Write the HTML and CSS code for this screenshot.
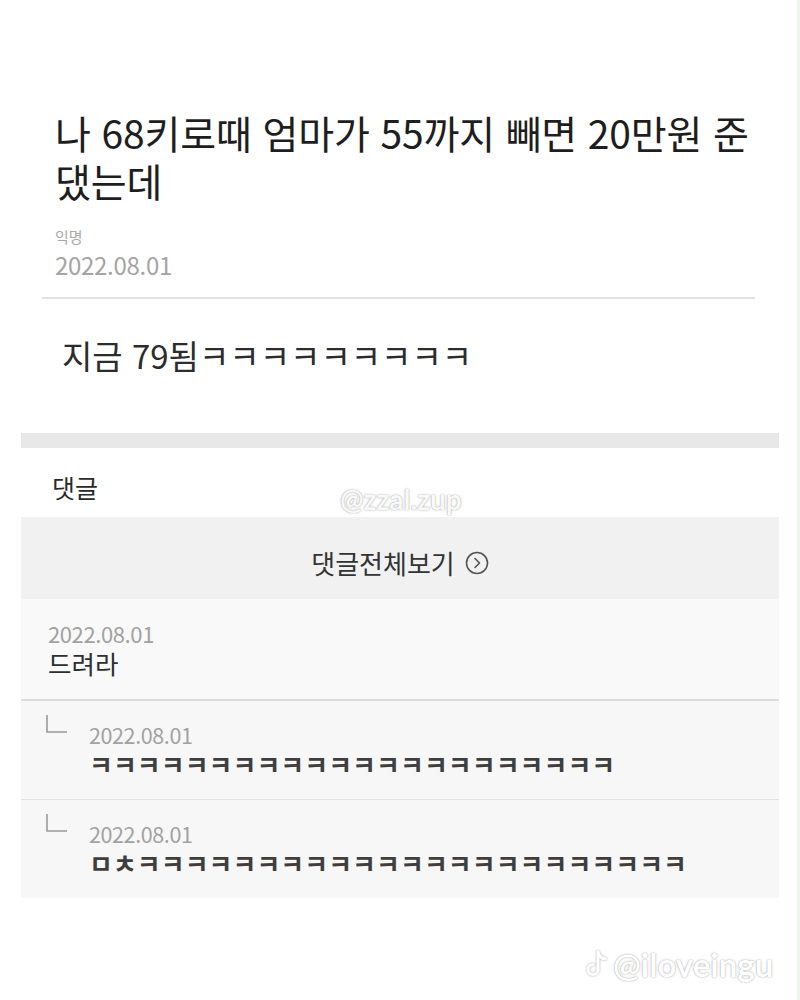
FILE: index.html
```html
<!DOCTYPE html>
<html lang="ko">
<head>
<meta charset="utf-8">
<title>post</title>
<link rel="stylesheet" href="styles.css">
</head>
<body>
<div class="page">
  <header class="post-head">
    <h1 class="title">나 68키로때 엄마가 55까지 빼면 20만원 준<br>댔는데</h1>
    <div class="author">익명</div>
    <div class="post-date">2022.08.01</div>
  </header>
  <div class="divider"></div>
  <div class="post-body">지금 79됨ㅋㅋㅋㅋㅋㅋㅋㅋㅋ</div>
  <div class="gap-bar"></div>
  <section class="comments">
    <h2 class="comments-label">댓글</h2>
    <div class="comment-box">
      <div class="view-all">
        <span>댓글전체보기</span>
        <svg class="arrow-circle" width="24" height="24" viewBox="0 0 24 24">
          <circle cx="12" cy="12" r="10.5" fill="none" stroke="#555" stroke-width="1.6"/>
          <path d="M10 7.5 L14.5 12 L10 16.5" fill="none" stroke="#555" stroke-width="1.6" stroke-linecap="round" stroke-linejoin="round"/>
        </svg>
      </div>
      <div class="comment">
        <div class="c-date">2022.08.01</div>
        <div class="c-text">드려라</div>
      </div>
      <div class="comment reply">
        <svg class="reply-mark" width="22" height="20" viewBox="0 0 22 20">
          <path d="M1 1 V18 H21" fill="none" stroke="#9a9a9a" stroke-width="1.6"/>
        </svg>
        <div class="reply-body">
          <div class="c-date">2022.08.01</div>
          <div class="c-text">ㅋㅋㅋㅋㅋㅋㅋㅋㅋㅋㅋㅋㅋㅋㅋㅋㅋㅋㅋㅋㅋㅋ</div>
        </div>
      </div>
      <div class="comment reply last">
        <svg class="reply-mark" width="22" height="20" viewBox="0 0 22 20">
          <path d="M1 1 V18 H21" fill="none" stroke="#9a9a9a" stroke-width="1.6"/>
        </svg>
        <div class="reply-body">
          <div class="c-date">2022.08.01</div>
          <div class="c-text">ㅁㅊㅋㅋㅋㅋㅋㅋㅋㅋㅋㅋㅋㅋㅋㅋㅋㅋㅋㅋㅋㅋㅋㅋㅋ</div>
        </div>
      </div>
    </div>
  </section>
  <div class="wm wm-zzal">@zzal.zup</div>
  <div class="wm wm-tiktok">
    <svg class="tt-logo" width="22" height="28" viewBox="0 0 22 28">
      <path d="M12 2 V19.5 A5 5 0 1 1 7 14.5 M12 2 C12.5 6 15.5 8.5 19.5 8.8" fill="none" stroke="#fff" stroke-width="3" stroke-linecap="round"/>
    </svg>
    <span>@iloveingu</span>
  </div>
</div>
</body>
</html>
```

FILE: styles.css
```css
body {
  margin: 0;
  font-family: "Noto Sans CJK KR", "Noto Sans", sans-serif;
  color: #222;
  background: #fff;
}
.page {
  position: relative;
  width: 800px;
  height: 1000px;
  background: #fff;
  box-shadow: inset -3px 0 0 #eef6ea;
  overflow: hidden;
}
.post-head {
  padding: 108px 20px 0 55px;
}
.title {
  margin: 0;
  font-size: 39px;
  line-height: 48px;
  font-weight: 400;
  color: #1e1e1e;
  letter-spacing: -0.15px;
}
.author {
  margin-top: 23px;
  font-size: 15px;
  line-height: 20px;
  color: #a8a8a8;
}
.post-date {
  margin-top: 4px;
  font-size: 24px;
  line-height: 28px;
  color: #a4a4a4;
  letter-spacing: -0.3px;
}
.divider {
  margin: 18px 45px 0 42px;
  height: 2px;
  background: #e2e2e2;
}
.post-body {
  margin-top: 36px;
  padding-left: 62px;
  font-size: 33px;
  line-height: 40px;
  color: #2c2c2c;
}
.gap-bar {
  margin: 58px 21px 0 21px;
  height: 15px;
  background: #e8e8e8;
}
.comments {
  padding: 0 21px;
}
.comments-label {
  margin: 24px 0 0 31px;
  font-size: 25px;
  line-height: 30px;
  font-weight: 400;
  color: #2a2a2a;
}
.comment-box {
  margin-top: 15px;
  background: #f8f8f8;
}
.view-all {
  display: flex;
  justify-content: center;
  align-items: center;
  gap: 10px;
  height: 82px;
  padding-top: 10px;
  box-sizing: border-box;
  background: #f1f1f1;
  font-size: 26px;
  line-height: 30px;
  color: #333;
}
.arrow-circle {
  display: block;
}
.comment {
  padding: 22px 0 18px 27px;
  border-bottom: 2px solid #dedede;
  background: #f9f9f9;
}
.c-date {
  font-size: 22px;
  line-height: 24px;
  color: #a2a2a2;
  letter-spacing: -0.4px;
}
.c-text {
  font-size: 25.5px;
  line-height: 36px;
  color: #2e2e2e;
}
.reply {
  display: grid;
  grid-template-columns: 43px 1fr;
  padding: 13px 0 18px 25px;
  border-bottom: 1px solid #e2e2e2;
  background: #f7f7f7;
}
.reply.last {
  border-bottom: none;
}
.reply-mark {
  display: block;
}
.reply-body {
  padding-top: 9px;
}
.reply .c-date {
  font-size: 21.5px;
}
.reply .c-text {
  font-size: 26px;
  line-height: 34px;
  font-weight: 700;
  color: #3e3e3e;
}
.wm {
  position: absolute;
  color: #fff;
  font-family: "Lato", "Open Sans", sans-serif;
  font-weight: 700;
  text-shadow: 0 0 1px rgba(0,0,0,0.35), 0 0 3px rgba(0,0,0,0.18);
}
.wm-zzal {
  left: 340px;
  top: 482px;
  font-size: 28px;
  line-height: 34px;
  color: rgba(255,255,255,0.95);
}
.wm-tiktok {
  left: 586px;
  top: 945px;
  display: flex;
  align-items: center;
  gap: 5px;
  font-size: 33px;
  line-height: 38px;
}
.tt-logo {
  display: block;
  filter: drop-shadow(0 0 1px rgba(0,0,0,0.35));
}
```
